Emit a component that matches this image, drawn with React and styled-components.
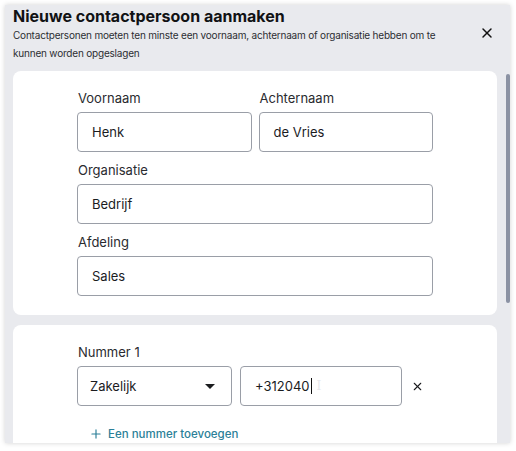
import React from "react";
import styled, { createGlobalStyle } from "styled-components";
import { X, Plus } from "lucide-react";

const GlobalStyle = createGlobalStyle`
  html, body {
    margin: 0;
    background: #ffffff;
  }

  body {
    font-family: Inter, "Noto Sans", sans-serif;
    color: #1b1c1f;
  }
`;

const Frame = styled.div`
  padding: 5px 6px 8px 5px;
`;

const Panel = styled.div`
  position: relative;
  width: 505px;
  height: 438px;
  overflow: hidden;
  background: #e9eaee;
  box-shadow: 0 0 5px rgba(0, 0, 0, 0.18);
  display: flex;
  flex-direction: column;
`;

const Header = styled.div`
  display: flex;
  justify-content: space-between;
  align-items: flex-start;
  padding: 1px 8px 0 8px;
`;

const Title = styled.h1`
  margin: 0;
  font-size: 16px;
  line-height: 20px;
  font-weight: 700;
  color: #111214;
`;

const Subtitle = styled.p`
  margin: 0;
  width: 445px;
  font-size: 10px;
  letter-spacing: -0.2px;
  line-height: 18px;
  color: #2c2e33;
`;

const CloseButton = styled.button`
  border: 0;
  background: none;
  padding: 0;
  margin: 19px 7px 0 0;
  display: flex;
  color: #111;
`;

const Body = styled.div`
  display: flex;
  flex-direction: column;
  gap: 10px;
  padding: 9px 13px 0 8px;
`;

const Card = styled.section`
  background: #ffffff;
  border-radius: 8px;
  padding: 9px 64px 19px;
  flex-shrink: 0;
`;

const Row = styled.div`
  display: grid;
  grid-template-columns: 1fr 1fr;
  gap: 7px;
`;

const Field = styled.div`
  display: flex;
  flex-direction: column;
`;

const Label = styled.label`
  margin: 8px 0 4px 1px;
  font-size: 13px;
  line-height: 20px;
  color: #2a2b2f;
`;

const Input = styled.div`
  box-sizing: border-box;
  height: 40px;
  border: 1px solid #9a9ea7;
  border-radius: 4px;
  padding: 0 14px;
  display: flex;
  align-items: center;
  font-size: 13px;
  color: #1b1c1f;
  width: ${(p) => p.$width || "auto"};
`;

const Caret = styled.span`
  display: inline-block;
  width: 1px;
  height: 16px;
  margin-left: 1px;
  background: #111;
`;

const Pointer = styled.span`
  margin-left: 5px;
  font-family: "DejaVu Serif", serif;
  font-size: 12px;
  color: #e8e9ec;
`;

const PhoneRow = styled.div`
  display: flex;
  align-items: center;
  gap: 8px;
`;

const SelectBox = styled(Input)`
  justify-content: space-between;
  padding: 0 16px 0 12px;
`;

const Triangle = styled.span`
  width: 0;
  height: 0;
  border-left: 5px solid transparent;
  border-right: 5px solid transparent;
  border-top: 5px solid #1b1c1f;
`;

const RemoveButton = styled.button`
  border: 0;
  background: none;
  padding: 0;
  margin-left: 1px;
  display: flex;
  color: #1b1c1f;
`;

const AddLink = styled.a`
  display: flex;
  align-items: center;
  gap: 5px;
  margin: 21px 0 0 12px;
  font-size: 11.5px;
  font-weight: 500;
  color: #2b7f98;
`;

const Scrollbar = styled.div`
  position: absolute;
  right: 0;
  top: 69px;
  width: 4px;
  height: 229px;
  border-radius: 2px;
  background: #8b92a3;
`;

export default function App() {
  return (
    <Frame>
      <GlobalStyle />
      <Panel>
        <Header>
          <div>
            <Title>Nieuwe contactpersoon aanmaken</Title>
            <Subtitle>
              Contactpersonen moeten ten minste een voornaam, achternaam of
              organisatie hebben om te kunnen worden opgeslagen
            </Subtitle>
          </div>
          <CloseButton aria-label="Sluiten">
            <X size={16} strokeWidth={2.2} />
          </CloseButton>
        </Header>
        <Body>
          <Card>
            <Row>
              <Field>
                <Label>Voornaam</Label>
                <Input>Henk</Input>
              </Field>
              <Field>
                <Label>Achternaam</Label>
                <Input>de Vries</Input>
              </Field>
            </Row>
            <Field>
              <Label>Organisatie</Label>
              <Input>Bedrijf</Input>
            </Field>
            <Field>
              <Label>Afdeling</Label>
              <Input>Sales</Input>
            </Field>
          </Card>
          <Card>
            <Field>
              <Label>Nummer 1</Label>
              <PhoneRow>
                <SelectBox $width="155px">
                  Zakelijk
                  <Triangle />
                </SelectBox>
                <Input $width="162px">
                  +312040
                  <Caret />
                  <Pointer>I</Pointer>
                </Input>
                <RemoveButton aria-label="Verwijderen">
                  <X size={13} strokeWidth={2} />
                </RemoveButton>
              </PhoneRow>
            </Field>
            <AddLink>
              <Plus size={14} strokeWidth={2} />
              Een nummer toevoegen
            </AddLink>
          </Card>
        </Body>
        <Scrollbar />
      </Panel>
    </Frame>
  );
}
